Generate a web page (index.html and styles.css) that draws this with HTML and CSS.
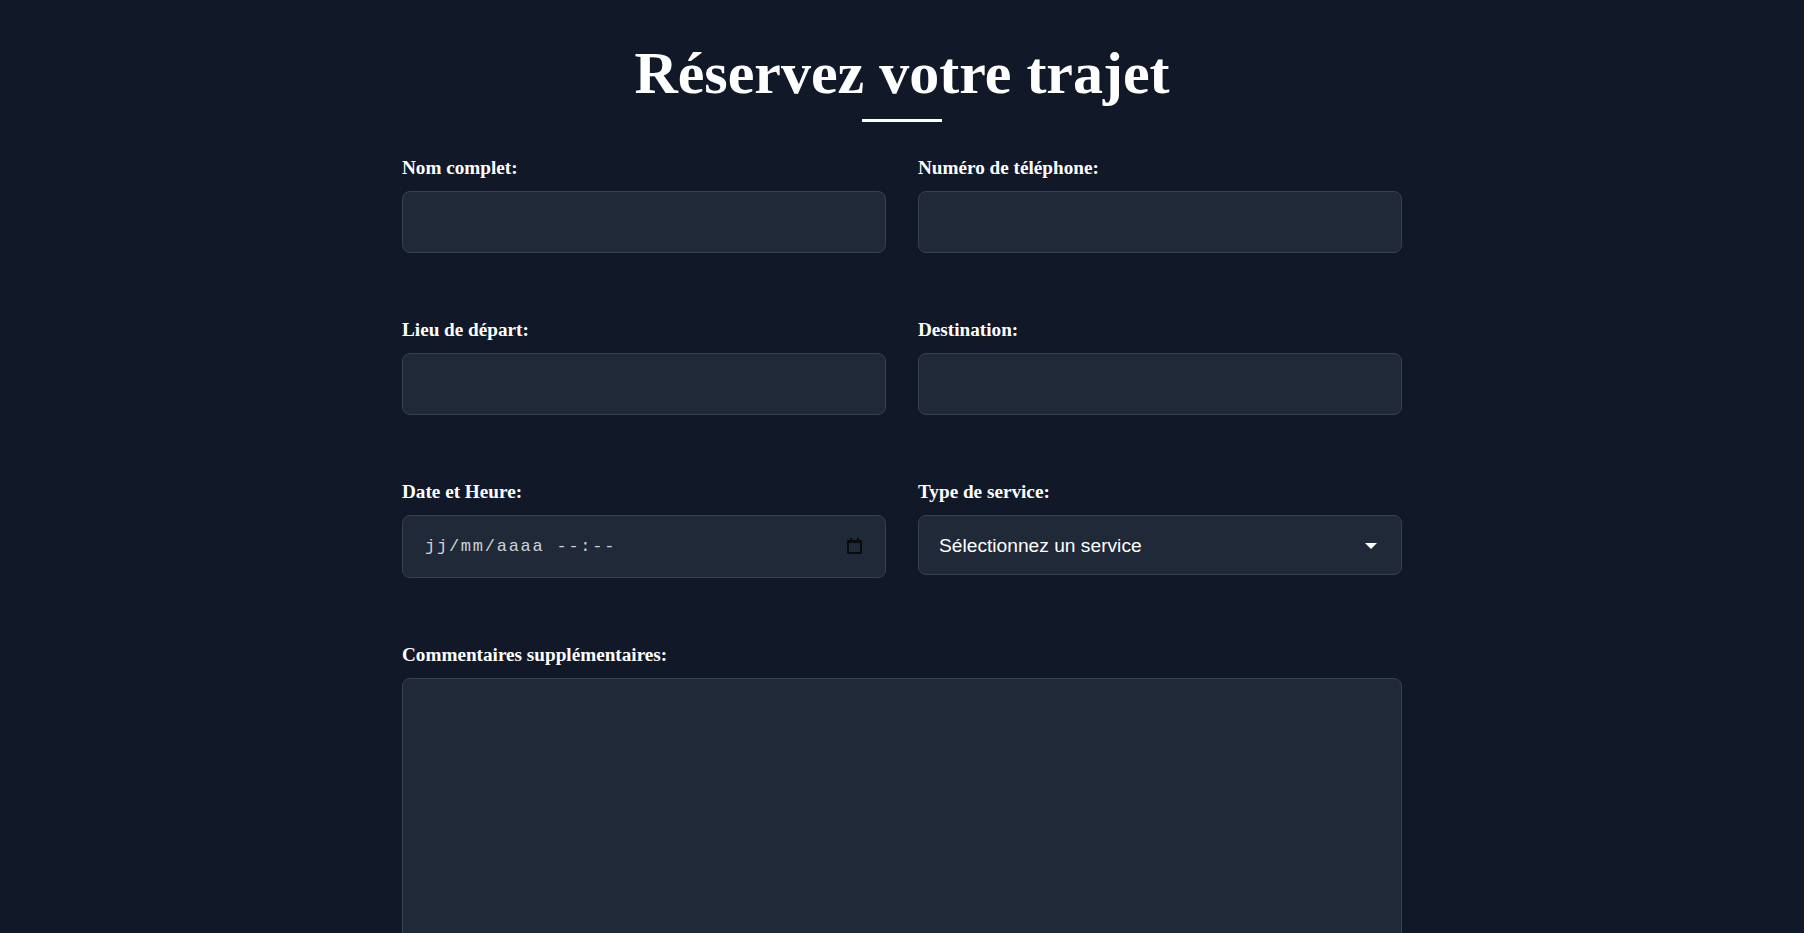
FILE: index.html
```html
<!DOCTYPE html>
<html lang="fr">
<head>
<meta charset="utf-8">
<title>Réservez votre trajet</title>
<link rel="stylesheet" href="styles.css">
</head>
<body>
<main class="page">
  <header class="heading">
    <h1 class="title">Réservez votre trajet</h1>
    <div class="title-rule"></div>
  </header>
  <form class="form">
    <div class="field">
      <label class="label" for="nom">Nom complet:</label>
      <input class="control" id="nom" type="text">
    </div>
    <div class="field">
      <label class="label" for="tel">Numéro de téléphone:</label>
      <input class="control" id="tel" type="tel">
    </div>
    <div class="field">
      <label class="label" for="depart">Lieu de départ:</label>
      <input class="control" id="depart" type="text">
    </div>
    <div class="field">
      <label class="label" for="dest">Destination:</label>
      <input class="control" id="dest" type="text">
    </div>
    <div class="field">
      <label class="label" for="date">Date et Heure:</label>
      <div class="date-wrap">
        <input class="control control-date" id="date" type="text" placeholder="jj/mm/aaaa --:--">
        <svg class="cal-icon" width="15" height="16" viewBox="0 0 15 16" aria-hidden="true">
          <path fill="#0b0b0b" fill-rule="evenodd" d="M3 0h2v2h5V0h2v2h1.5A1.5 1.5 0 0 1 15 3.5v11a1.5 1.5 0 0 1-1.5 1.5h-12A1.5 1.5 0 0 1 0 14.5v-11A1.5 1.5 0 0 1 1.5 2H3zM2 5v9h11V5z"/>
        </svg>
      </div>
    </div>
    <div class="field">
      <label class="label" for="service">Type de service:</label>
      <div class="select-wrap">
        <select class="control control-select" id="service">
          <option>Sélectionnez un service</option>
          <option>Transfert aéroport</option>
          <option>Trajet en ville</option>
          <option>Longue distance</option>
        </select>
        <svg class="select-arrow" width="12" height="6" viewBox="0 0 12 6" aria-hidden="true">
          <path fill="#ffffff" d="M0 0h12L6 6z"/>
        </svg>
      </div>
    </div>
    <div class="field field-wide">
      <label class="label" for="comments">Commentaires supplémentaires:</label>
      <textarea class="control control-area" id="comments"></textarea>
    </div>
  </form>
</main>
</body>
</html>
```

FILE: styles.css
```css
html, body {
  margin: 0;
  padding: 0;
  background: #111827;
}

body {
  color: #ffffff;
  font-family: "Liberation Serif", "Times New Roman", serif;
}

.page {
  max-width: 1000px;
  margin: 0 auto;
  padding-top: 40px;
  padding-bottom: 40px;
}

.heading {
  display: flex;
  flex-direction: column;
  align-items: center;
  margin-bottom: 35px;
}

.title {
  margin: 0;
  font-size: 60px;
  font-weight: 700;
  line-height: 66px;
  text-align: center;
  color: #ffffff;
}

.title-rule {
  width: 80px;
  height: 3px;
  margin-top: 13px;
  background: #ffffff;
}

.form {
  display: grid;
  grid-template-columns: 1fr 1fr;
  column-gap: 32px;
  row-gap: 66px;
}

.field {
  display: flex;
  flex-direction: column;
}

.field-wide {
  grid-column: 1 / -1;
}

.label {
  display: block;
  font-size: 19.2px;
  font-weight: 700;
  line-height: 22px;
  margin-bottom: 12px;
  color: #ffffff;
}

.control {
  box-sizing: border-box;
  width: 100%;
  height: 62px;
  margin: 0;
  padding: 0 20px;
  background: #1f2937;
  border: 1px solid #374151;
  border-radius: 8px;
  color: #ffffff;
  font-family: "Liberation Sans", Arial, sans-serif;
  font-size: 19.2px;
  outline: none;
}

.date-wrap,
.select-wrap {
  position: relative;
}

.control-date {
  padding-left: 22px;
  font-family: "Liberation Mono", "Courier New", monospace;
  font-size: 17px;
  letter-spacing: 1.75px;
  height: 62.5px;
}

.control-date::placeholder {
  color: #cfd3d9;
  opacity: 1;
}

.cal-icon {
  position: absolute;
  right: 24px;
  top: 23px;
  pointer-events: none;
}

.control-select {
  height: 60px;
  padding-left: 20px;
  -webkit-appearance: none;
  appearance: none;
}

.select-arrow {
  position: absolute;
  right: 25px;
  top: 28px;
  pointer-events: none;
}

.control-area {
  height: 300px;
  padding: 16px 20px;
  resize: vertical;
}
```
